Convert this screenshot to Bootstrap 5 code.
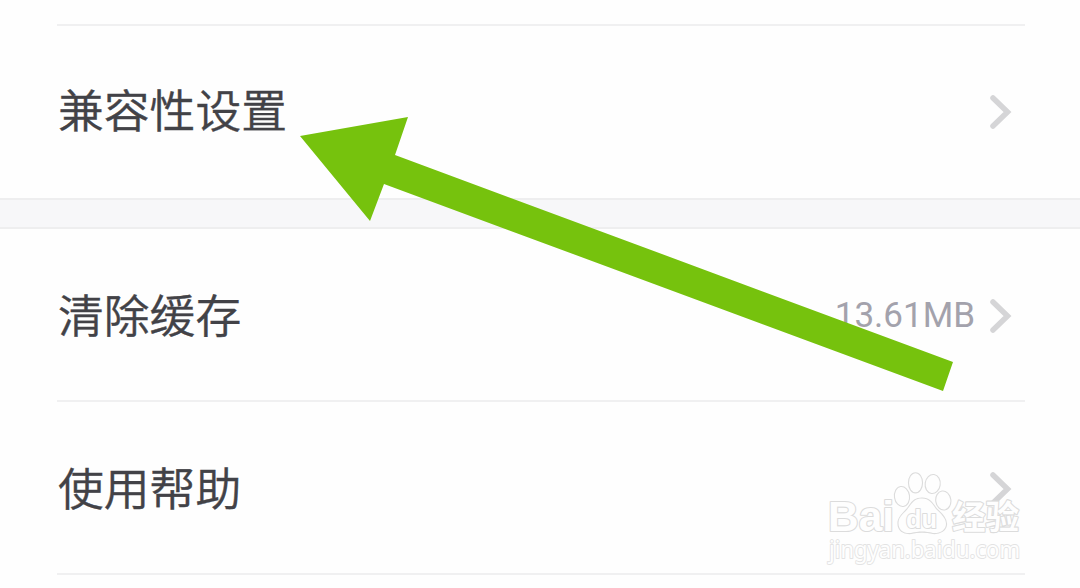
<!DOCTYPE html>
<html lang="zh-CN">
<head>
    <meta charset="UTF-8">
    <meta name="viewport" content="width=device-width, initial-scale=1.0">
    <title>设置</title>
    <link rel="stylesheet" href="https://cdn.jsdelivr.net/npm/bootstrap@5.3.0/dist/css/bootstrap.min.css">
    <style>
        body {
            height: 588px;
            background: #fefefe;
            font-family: Roboto, "Noto Sans CJK SC", sans-serif;
        }
        .settings-group {
            padding: 0 55px 0 57px;
        }
        .settings-top {
            height: 26px;
            border-bottom: 2px solid #f0f0f1;
        }
        .settings-row {
            height: 173px;
            padding: 3px 12px 0 1px;
            border-bottom: 2px solid #f0f0f1;
        }
        .settings-row.row-last {
            height: 172px;
            padding-top: 0;
            padding-bottom: 1px;
            border-bottom: 0;
        }
        .group-gap {
            height: 31px;
            background: #f7f7f9;
            border-top: 2px solid #eeeeef;
            border-bottom: 2px solid #eeeeef;
        }
        .row-title {
            color: #424247;
            font-family: "Noto Sans CJK SC", sans-serif;
            font-size: 45.8px;
            font-weight: 350;
            -webkit-text-stroke: 0.4px #424247;
            line-height: 60px;
            padding-bottom: 7px;
        }
        .row-value {
            color: #a3a2ac;
            font-size: 35px;
            line-height: 40px;
            margin-right: 14px;
        }
        .chevron {
            width: 24px;
            height: 38px;
            fill: none;
            stroke: #d5d5d7;
            stroke-width: 5.5;
            stroke-linecap: round;
        }
        .overlay {
            position: absolute;
            top: 0;
            left: 0;
            pointer-events: none;
        }
    </style>
</head>
<body class="position-relative overflow-hidden">
    <div class="settings-group">
        <div class="settings-top"></div>
        <div class="settings-row row-last d-flex align-items-center justify-content-between">
            <span class="row-title">兼容性设置</span>
            <svg class="chevron" viewBox="0 0 24 38"><path d="M4 5L18.500 19L4 33"/></svg>
        </div>
    </div>
    <div class="group-gap"></div>
    <div class="settings-group">
        <div class="settings-row d-flex align-items-center justify-content-between">
            <span class="row-title">清除缓存</span>
            <div class="d-flex align-items-center">
                <span class="row-value">13.61MB</span>
                <svg class="chevron" viewBox="0 0 24 38"><path d="M4 5L18.500 19L4 33"/></svg>
            </div>
        </div>
        <div class="settings-row d-flex align-items-center justify-content-between">
            <span class="row-title">使用帮助</span>
            <svg class="chevron" viewBox="0 0 24 38"><path d="M4 5L18.500 19L4 33"/></svg>
        </div>
    </div>

    <!-- arrow and watermark lie over the list -->
    <svg class="overlay" width="1080" height="588" viewBox="0 0 1080 588">
        <polygon fill="#76c20d" points="300,136 408,117 395,155 953,362 943,391 384,184 370,221"/>
        <g fill="#fefefe" stroke="#dcdcdc" stroke-width="2.2" paint-order="stroke" stroke-linejoin="round" font-family="'Liberation Sans', sans-serif">
            <text x="828" y="531" font-size="42" font-weight="bold" textLength="66" lengthAdjust="spacingAndGlyphs">Bai</text>
            <ellipse cx="902" cy="496.500" rx="7" ry="9.500" transform="rotate(-8 902 496.500)"/>
            <ellipse cx="915.500" cy="482.800" rx="6.500" ry="9.500"/>
            <ellipse cx="932.700" cy="484" rx="7" ry="9" transform="rotate(8 932.700 484)"/>
            <ellipse cx="943.300" cy="500.500" rx="7" ry="9" transform="rotate(-8 943.300 500.500)"/>
            <path d="M922 498.500C929 498.500 932 503 936 509C941 514 946 518 946 524C946 530 940 533.500 933 533C925 531 919 531 911 533C903 533.500 898.500 530 898.500 523C898.500 516 905 513 909 507C913 501 916 498.500 922 498.500Z"/>
            <text x="906" y="528" font-size="26" font-weight="bold" stroke-width="2" textLength="31" lengthAdjust="spacingAndGlyphs">du</text>
            <text x="952" y="529" font-size="33" font-weight="bold" font-family="'Noto Sans CJK SC', sans-serif" textLength="67" lengthAdjust="spacingAndGlyphs">经验</text>
            <text x="829" y="558" font-size="23" stroke="#e3e3e3" stroke-width="1.8" font-family="'Noto Sans', sans-serif" textLength="191" lengthAdjust="spacingAndGlyphs">jingyan.baidu.com</text>
        </g>
    </svg>
    <script src="https://cdn.jsdelivr.net/npm/bootstrap@5.3.0/dist/js/bootstrap.bundle.min.js"></script>
</body>
</html>
